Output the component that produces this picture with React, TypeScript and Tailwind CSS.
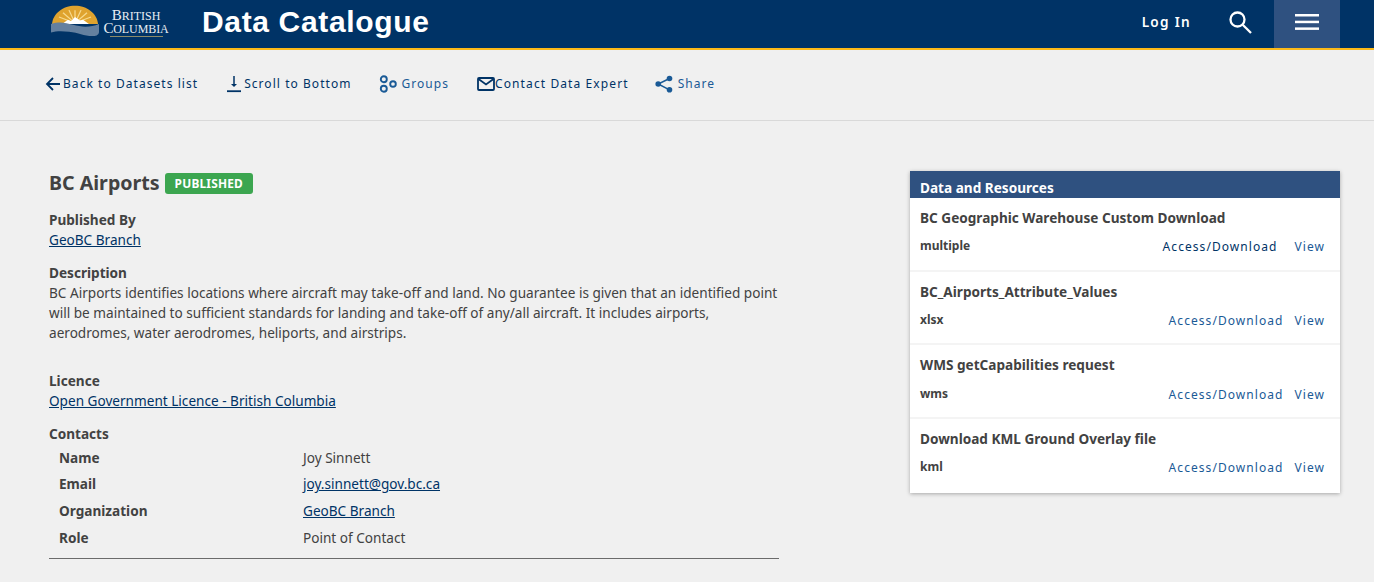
const resources = [
  { name: "BC Geographic Warehouse Custom Download", format: "multiple", wide: true },
  { name: "BC_Airports_Attribute_Values", format: "xlsx", wide: false },
  { name: "WMS getCapabilities request", format: "wms", wide: false },
  { name: "Download KML Ground Overlay file", format: "kml", wide: false },
];

const contacts = [
  { label: "Name", value: "Joy Sinnett" },
  { label: "Email", value: "joy.sinnett@gov.bc.ca", link: true },
  { label: "Organization", value: "GeoBC Branch", link: true },
  { label: "Role", value: "Point of Contact" },
];

function BcLogo() {
  return (
    <svg width="48" height="31" viewBox="0 0 48 36" preserveAspectRatio="none" className="shrink-0">
      <path d="M1 22C2 10 12 1 24 1s22 9 23 21z" fill="#dfa32e" />
      <g stroke="#f7d98c" strokeWidth="1.3">
        <path d="M24 21L24 6M24 21L18 6M24 21L30 6M24 21L12 9M24 21L36 9M24 21L8 14M24 21L40 14" />
      </g>
      <path d="M11 22l6-5 3 2 4-5 5 4 3-1 6 5z" fill="#fff" />
      <path d="M0 22c8-3 14-2 22 1 9 3 18 3 26-1v9c0 3-2 5-6 5-10 0-14-4-24-5-7-1-13-1-18 1z" fill="#64809f" />
    </svg>
  );
}

function SearchIcon() {
  return (
    <svg width="25" height="25" viewBox="0 0 25 25" fill="none" stroke="#fff" strokeWidth="2.3">
      <circle cx="9.5" cy="9.5" r="7" />
      <path d="M14.7 14.7l8.3 8.3" />
    </svg>
  );
}

function MenuIcon() {
  return (
    <svg width="24" height="18" viewBox="0 0 24 18" fill="#fff">
      <rect y="1" width="24" height="2.5" />
      <rect y="7.7" width="24" height="2.5" />
      <rect y="14.4" width="24" height="2.5" />
    </svg>
  );
}

function BackIcon() {
  return (
    <svg width="16" height="16" viewBox="0 0 16 16" fill="none" stroke="#003366" strokeWidth="1.8">
      <path d="M15 8H2M8 2L2 8l6 6" />
    </svg>
  );
}

function DownloadIcon() {
  return (
    <svg width="16" height="18" viewBox="0 0 16 18" fill="none" stroke="#003366" strokeWidth="1.5">
      <path d="M8 1v10" />
      <path d="M5 9h6l-3 3z" fill="#003366" stroke="none" />
      <path d="M1 16.2h14" strokeWidth="1.8" />
    </svg>
  );
}

function GroupsIcon() {
  return (
    <svg width="18" height="18" viewBox="0 0 18 18" fill="none" stroke="#1a5a96" strokeWidth="1.9">
      <circle cx="4.8" cy="4.2" r="3" />
      <circle cx="4.8" cy="13.8" r="3" />
      <circle cx="14" cy="9" r="2.8" />
    </svg>
  );
}

function MailIcon() {
  return (
    <svg width="18" height="16" viewBox="0 0 18 16" fill="none" stroke="#003366" strokeWidth="1.8">
      <rect x="1" y="2" width="16" height="12" rx="1" />
      <path d="M1.5 3l7.5 5.5L16.5 3" />
    </svg>
  );
}

function ShareIcon() {
  return (
    <svg width="18" height="18" viewBox="0 0 18 18" fill="#1a5a96">
      <circle cx="14.5" cy="3.5" r="2.8" />
      <circle cx="3.2" cy="9" r="2.8" />
      <circle cx="14.5" cy="14.8" r="2.8" />
      <path d="M14.5 3.5L3.2 9l11.3 5.8" fill="none" stroke="#1a5a96" strokeWidth="1.5" />
    </svg>
  );
}

export default function App() {
  return (
    <div className="h-[582px] overflow-hidden bg-[#f0f0f0] font-['Noto_Sans',sans-serif] text-[13.6px] text-[#424242]">
      <header className="flex h-[50px] items-stretch border-b-2 border-[#fcba19] bg-[#003366] pl-[51px] pr-[34px] text-white">
        <div className="flex items-center pb-[10px] pt-[3px]">
          <BcLogo />
          <div className="ml-[1px] mt-[5px] w-[72px] text-center font-['Liberation_Serif',serif] leading-[12px] text-[#e8edf3]">
            <div className="text-[15px] tracking-[0px]">
              B<span className="text-[12px]">RITISH</span>
            </div>
            <div className="text-[15px] tracking-[-0.1px]">
              C<span className="text-[12px]">OLUMBIA</span>
            </div>
            <div className="mx-auto mt-[1px] h-px w-[53px] bg-[#8b8b6a]" />
          </div>
        </div>
        <h1 className="ml-[30px] self-center pb-[4px] font-['Liberation_Sans',sans-serif] text-[30px] font-bold leading-[40px] tracking-[0.65px]">
          Data Catalogue
        </h1>
        <div className="ml-auto flex items-center pb-[4px] text-[13.6px] font-semibold tracking-[1.3px]">Log In</div>
        <div className="ml-[37px] flex items-center pb-[4px]">
          <SearchIcon />
        </div>
        <div className="ml-[21px] flex w-[66px] items-center justify-center bg-[#2f5180] pb-[4px]">
          <MenuIcon />
        </div>
      </header>

      <nav className="flex h-[71px] items-center border-b border-[#d9d9d9] pb-[2px] pl-[45px] text-[12px] tracking-[1.05px] text-[#003366]">
        <span className="flex items-center gap-[2px]">
          <BackIcon />
          Back to Datasets list
        </span>
        <span className="ml-[28px] flex items-center gap-[2px]">
          <DownloadIcon />
          Scroll to Bottom
        </span>
        <span className="ml-[27px] flex items-center gap-[5px] text-[#1a5a96]">
          <GroupsIcon />
          Groups
        </span>
        <span className="ml-[28px] flex items-center">
          <MailIcon />
          <span className="tracking-[1.1px]">Contact Data Expert</span>
        </span>
        <span className="ml-[26px] flex items-center gap-[5px] text-[#1a5a96]">
          <ShareIcon />
          Share
        </span>
      </nav>

      <main className="flex items-start justify-between pl-[49px] pr-[34px] pt-[50px]">
        <section className="w-[730px]">
          <div className="flex h-[24px] items-center gap-[5px]">
            <h2 className="text-[19.6px] font-bold leading-[24px]">BC Airports</h2>
            <span className="rounded-[3px] bg-[#3ca650] px-[10px] text-[11.9px] font-bold leading-[21px] tracking-[0.2px] text-white">
              PUBLISHED
            </span>
          </div>
          <div className="mt-[15px] font-bold leading-[20px]">Published By</div>
          <a className="block leading-[20px] text-[#003366] underline">GeoBC Branch</a>
          <div className="mt-[13px] font-bold leading-[20px]">Description</div>
          <p className="leading-[20px]">
            BC Airports identifies locations where aircraft may take-off and land. No guarantee is given that an identified point
            will be maintained to sufficient standards for landing and take-off of any/all aircraft. It includes airports,
            aerodromes, water aerodromes, heliports, and airstrips.
          </p>
          <div className="mt-[28px] font-bold leading-[20px]">Licence</div>
          <a className="block leading-[20px] text-[#003366] underline">Open Government Licence - British Columbia</a>
          <div className="mt-[13px] font-bold leading-[20px]">Contacts</div>
          <div className="border-b border-[#6b6b6b] pb-[6.8px] pl-[10px] pt-[0.4px]">
            {contacts.map((c) => (
              <div key={c.label} className="flex h-[26.8px] items-center">
                <span className="w-[244px] font-bold">{c.label}</span>
                {c.link ? <a className="text-[#003366] underline">{c.value}</a> : <span>{c.value}</span>}
              </div>
            ))}
          </div>
        </section>

        <aside className="w-[430px] bg-white shadow-[0_1px_4px_rgba(0,0,0,0.3)]">
          <div className="h-[27px] bg-[#2f5180] pl-[10px] pt-[7px] text-[13.6px] font-bold leading-[19px] text-white">Data and Resources</div>
          {resources.map((r, i) => (
            <div key={r.name} className={`h-[73.7px] px-[10px] ${i < resources.length - 1 ? "border-b-2 border-[#f4f4f4]" : ""}`}>
              <div className="pt-[10px] font-bold leading-[20px]">{r.name}</div>
              <div className="mt-[8px] flex items-center justify-between pr-[5px]">
                <span className="-mt-[1px] text-[12px] font-bold leading-[20px]">{r.format}</span>
                <span className="mt-[1.3px] flex text-[12px] leading-[20px] tracking-[1.06px] text-[#1a5a96]">
                  <a className={r.wide ? "text-[#003366]" : ""}>Access/Download</a>
                  <a className={r.wide ? "ml-[17px]" : "ml-[11px]"}>View</a>
                </span>
              </div>
            </div>
          ))}
        </aside>
      </main>
    </div>
  );
}
